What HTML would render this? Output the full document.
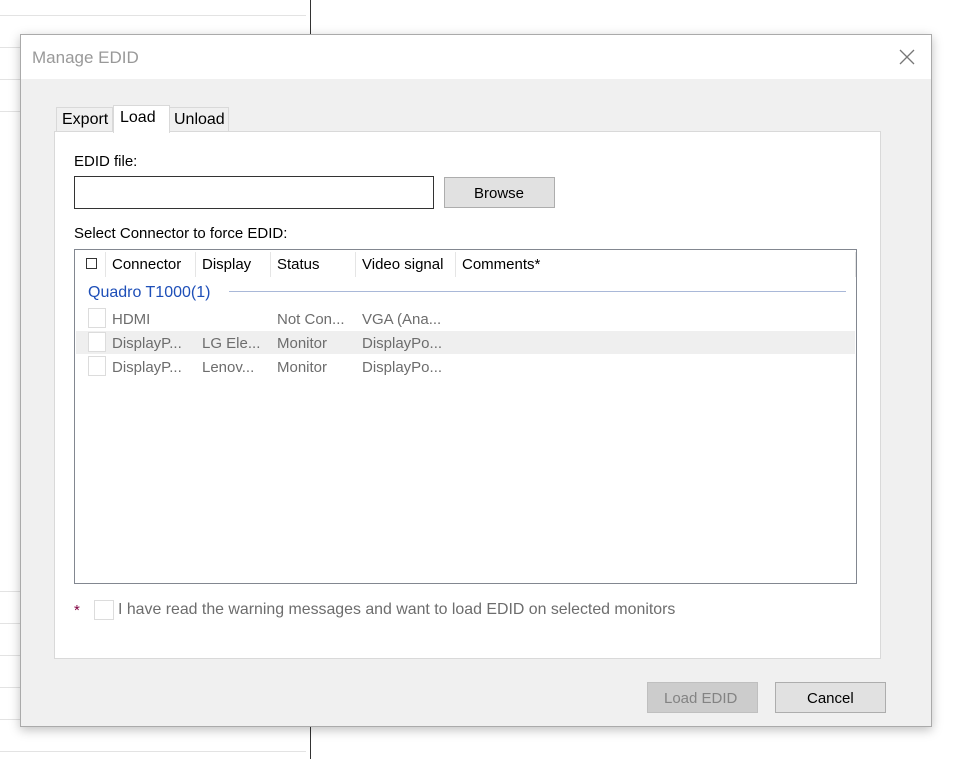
<!DOCTYPE html>
<html><head><style>
body{margin:0;width:953px;height:759px;background:#fff;position:relative;overflow:hidden;font-family:"Liberation Sans",sans-serif;font-size:15px;color:#000}
.a{position:absolute;box-sizing:border-box}
.hl{position:absolute;left:0;width:306px;height:1px;background:#e3e3e3}
.t{position:absolute;white-space:nowrap}
.g{color:#6d6d6d}
.cb{position:absolute;width:18px;height:20px;border:1px solid #dcdcdc;background:#fff;box-sizing:border-box}
</style></head><body>
<div class="hl" style="top:15px"></div><div class="hl" style="top:47px"></div><div class="hl" style="top:79px"></div><div class="hl" style="top:111px"></div>
<div class="hl" style="top:591px"></div><div class="hl" style="top:623px"></div><div class="hl" style="top:655px"></div><div class="hl" style="top:687px"></div><div class="hl" style="top:719px"></div><div class="hl" style="top:751px"></div>
<div class="a" style="left:310px;top:0;width:1px;height:759px;background:#333"></div>

<div class="a" style="left:20px;top:34px;width:912px;height:693px;background:#f0f0f0;border:1px solid #aaa;box-shadow:0 3px 10px rgba(0,0,0,.25)">
 <div class="a" style="left:0;top:0;width:910px;height:44px;background:#fff"></div>
 <div class="t" style="left:11px;top:13px;font-size:17px;color:#999">Manage EDID</div>
 <svg class="a" style="left:877px;top:13px" width="18" height="18"><path d="M2 2L16 16M16 2L2 16" stroke="#777" stroke-width="1.3"/></svg>
</div>
<div class="a" style="left:56px;top:107px;width:57px;height:25px;background:#f0f0f0;border:1px solid #d9d9d9"></div>
<div class="t" style="left:62px;top:111px;font-size:16px">Export</div>
<div class="a" style="left:169px;top:107px;width:60px;height:25px;background:#f0f0f0;border:1px solid #d9d9d9"></div>
<div class="t" style="left:174px;top:111px;font-size:16px">Unload</div>
<div class="a" style="left:54px;top:131px;width:827px;height:528px;background:#fff;border:1px solid #d9d9d9"></div>
<div class="a" style="left:113px;top:105px;width:57px;height:28px;background:#fff;border:1px solid #d9d9d9;border-bottom:none"></div>
<div class="t" style="left:120px;top:109px;font-size:16px">Load</div>

<div class="t" style="left:74px;top:153px">EDID file:</div>
<div class="a" style="left:74px;top:176px;width:360px;height:33px;border:1px solid #333;background:#fff"></div>
<div class="a" style="left:444px;top:177px;width:111px;height:31px;border:1px solid #adadad;background:#e1e1e1"></div>
<div class="t" style="left:474px;top:185px">Browse</div>
<div class="t" style="left:74px;top:225px">Select Connector to force EDID:</div>

<div class="a" style="left:74px;top:249px;width:783px;height:335px;border:1px solid #828790;background:#fff"></div>
<div class="a" style="left:86px;top:258px;width:11px;height:11px;border:1px solid #333"></div>
<div class="a" style="left:105px;top:252px;width:1px;height:25px;background:#e5e5e5"></div>
<div class="a" style="left:195px;top:252px;width:1px;height:25px;background:#e5e5e5"></div>
<div class="a" style="left:270px;top:252px;width:1px;height:25px;background:#e5e5e5"></div>
<div class="a" style="left:355px;top:252px;width:1px;height:25px;background:#e5e5e5"></div>
<div class="a" style="left:455px;top:252px;width:1px;height:25px;background:#e5e5e5"></div>
<div class="a" style="left:855px;top:252px;width:1px;height:25px;background:#e5e5e5"></div>
<div class="t" style="left:112px;top:256px">Connector</div>
<div class="t" style="left:202px;top:256px">Display</div>
<div class="t" style="left:277px;top:256px">Status</div>
<div class="t" style="left:362px;top:256px">Video signal</div>
<div class="t" style="left:462px;top:256px">Comments*</div>
<div class="t" style="left:88px;top:284px;font-size:16px;color:#1e4fb8">Quadro T1000(1)</div>
<div class="a" style="left:229px;top:291px;width:617px;height:1px;background:#a9b8d8"></div>
<div class="a" style="left:76px;top:331px;width:779px;height:23px;background:#efefef"></div>
<div class="cb" style="left:88px;top:308px"></div><div class="cb" style="left:88px;top:332px"></div><div class="cb" style="left:88px;top:356px"></div>
<div class="t g" style="left:112px;top:311px">HDMI</div><div class="t g" style="left:277px;top:311px">Not Con...</div><div class="t g" style="left:362px;top:311px">VGA (Ana...</div>
<div class="t g" style="left:112px;top:335px">DisplayP...</div><div class="t g" style="left:202px;top:335px">LG Ele...</div><div class="t g" style="left:277px;top:335px">Monitor</div><div class="t g" style="left:362px;top:335px">DisplayPo...</div>
<div class="t g" style="left:112px;top:359px">DisplayP...</div><div class="t g" style="left:202px;top:359px">Lenov...</div><div class="t g" style="left:277px;top:359px">Monitor</div><div class="t g" style="left:362px;top:359px">DisplayPo...</div>

<div class="t" style="left:74px;top:602px;color:#800040">*</div>
<div class="cb" style="left:94px;top:600px;width:20px"></div>
<div class="t g" style="left:118px;top:601px;font-size:15.9px">I have read the warning messages and want to load EDID on selected monitors</div>

<div class="a" style="left:647px;top:682px;width:111px;height:31px;border:1px solid #bfbfbf;background:#cccccc"></div>
<div class="t" style="left:664px;top:690px;color:#838383">Load EDID</div>
<div class="a" style="left:775px;top:682px;width:111px;height:31px;border:1px solid #adadad;background:#e1e1e1"></div>
<div class="t" style="left:807px;top:690px">Cancel</div>
</body></html>
